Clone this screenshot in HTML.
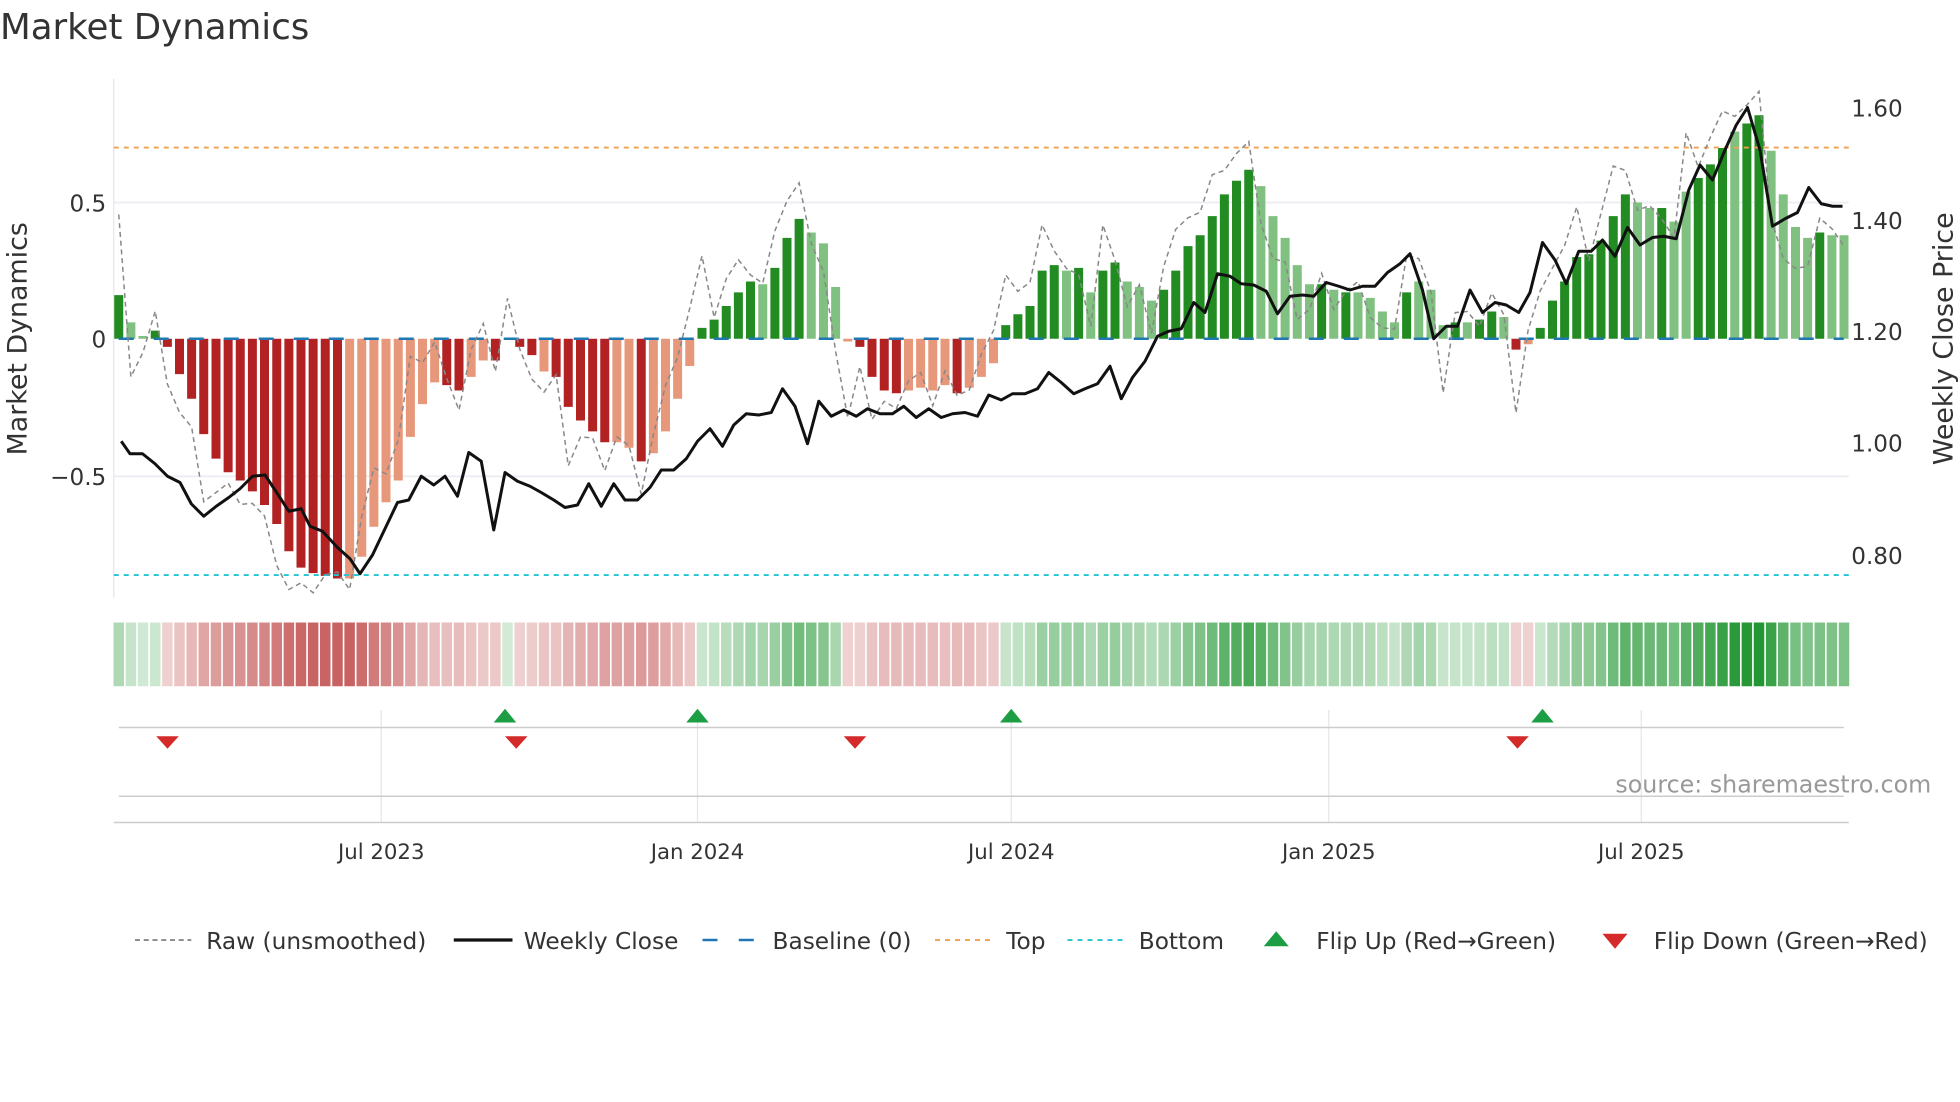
<!DOCTYPE html>
<html><head><meta charset="utf-8"><style>
html,body{margin:0;padding:0;background:#fff;width:1960px;height:1102px;overflow:hidden}
svg{display:block}
text{font-family:"DejaVu Sans","Liberation Sans",sans-serif;fill:#333}
</style></head><body>
<svg id="s" width="1960" height="1102" viewBox="0 0 1568 881.6" xmlns="http://www.w3.org/2000/svg">
<rect width="1568" height="882" fill="#fff"/>
<text x="0" y="31" font-size="28.5">Market Dynamics</text>
<line x1="91" y1="162" x2="1479" y2="162" stroke="#eceef4" stroke-width="1.5"/>
<line x1="91" y1="381" x2="1479" y2="381" stroke="#eceef4" stroke-width="1.5"/>
<line x1="91" y1="63" x2="91" y2="478" stroke="#e6e6e6" stroke-width="1"/>
<g id="bars"></g>
<line x1="91" y1="118" x2="1479" y2="118" stroke="#f0a050" stroke-width="1.5" stroke-dasharray="4,4"/>
<line x1="91" y1="460" x2="1479" y2="460" stroke="#22c4d4" stroke-width="1.5" stroke-dasharray="4,4"/>
<line x1="95" y1="271" x2="1475" y2="271" stroke="#1f77b4" stroke-width="2" stroke-dasharray="12,16"/>
<polyline id="raw" fill="none" stroke="#888" stroke-width="1.2" stroke-dasharray="4,3"/>
<polyline id="close" fill="none" stroke="#111" stroke-width="2.4" stroke-linejoin="round" points="97,353 104,363 114,363 124,371 134,381 144,386 153,403 163,413 173,405 183,398 192,391 202,381 212,380 222,395 231,409 241,407 248,421 258,425 270,438 280,447 288,459 298,444 308,423 318,402 327,400 337,381 347,388 356,381 366,397 375,362 385,369 395,424 404,378 414,385 424,389 433,394 443,400 452,406 462,404 471,387 481,405 491,387 500,400 510,400 520,390 529,376 539,376 549,367 558,353 568,343 578,357 587,340 597,331 607,332 617,330 626,311 636,325 646,355 655,321 665,333 675,328 685,333 694,327 704,331 714,331 723,325 733,334 743,327 753,334 762,331 772,330 782,333 791,316 801,320 810,315 820,315 830,311 839,298 849,306 859,315 868,311 878,307 888,293 897,319 906,302 916,289 926,269 935,265 945,263 955,242 964,250 974,219 984,221 993,227 1003,228 1013,233 1022,251 1032,237 1042,236 1051,237 1061,226 1071,229 1080,232 1090,229 1100,229 1110,218 1120,211 1128,203 1138,232 1147,271 1157,261 1166,261 1176,232 1186,250 1196,242 1205,244 1215,250 1224,234 1234,194 1244,208 1253,227 1263,201 1273,201 1282,192 1292,205 1302,182 1312,196 1322,190 1331,189 1341,191 1351,152 1360,132 1370,144 1380,120 1389,100 1398,86 1408,120 1418,181 1428,175 1438,170 1447,150 1457,163 1466,165 1474,165"/>
<g font-size="18.5">
<text x="85" y="169" text-anchor="end">0.5</text>
<text x="85" y="278" text-anchor="end">0</text>
<text x="85" y="388" text-anchor="end">−0.5</text>
<text x="1481" y="93">1.60</text>
<text x="1481" y="183">1.40</text>
<text x="1481" y="272">1.20</text>
<text x="1481" y="361">1.00</text>
<text x="1481" y="451">0.80</text>
</g>
<text transform="translate(21,271) rotate(-90)" text-anchor="middle" font-size="21.5">Market Dynamics</text>
<text transform="translate(1562,271) rotate(-90)" text-anchor="middle" font-size="21.5">Weekly Close Price</text>
<g id="heat"></g>
<g stroke="#e6e6e6" stroke-width="1">
<line x1="305" y1="568" x2="305" y2="658"/><line x1="558" y1="568" x2="558" y2="658"/><line x1="809" y1="568" x2="809" y2="658"/><line x1="1063" y1="568" x2="1063" y2="658"/><line x1="1313" y1="568" x2="1313" y2="658"/>
</g>
<line x1="95" y1="582" x2="1475" y2="582" stroke="#ccc" stroke-width="1.2"/>
<line x1="95" y1="637" x2="1475" y2="637" stroke="#ccc" stroke-width="1.2"/>
<line x1="91" y1="658" x2="1479" y2="658" stroke="#ccc" stroke-width="1.2"/>
<g fill="#1e9e44">
<polygon points="395,578 413,578 404,567"/><polygon points="549,578 567,578 558,567"/><polygon points="800,578 818,578 809,567"/><polygon points="1225,578 1243,578 1234,567"/>
</g>
<g fill="#d42a2a">
<polygon points="125,589 143,589 134,599"/><polygon points="404,589 422,589 413,599"/><polygon points="675,589 693,589 684,599"/><polygon points="1205,589 1223,589 1214,599"/>
</g>
<g font-size="17" text-anchor="middle">
<text x="305" y="687">Jul 2023</text><text x="558" y="687">Jan 2024</text><text x="809" y="687">Jul 2024</text><text x="1063" y="687">Jan 2025</text><text x="1313" y="687">Jul 2025</text>
</g>
<text x="1545" y="634" text-anchor="end" font-size="19" style="fill:#999">source: sharemaestro.com</text>
<g font-size="18.6">
<line x1="108" y1="752" x2="153" y2="752" stroke="#888" stroke-width="1.5" stroke-dasharray="4,3"/>
<text x="165" y="759">Raw (unsmoothed)</text>
<line x1="363" y1="752" x2="410" y2="752" stroke="#111" stroke-width="2.6"/>
<text x="419" y="759">Weekly Close</text>
<line x1="562" y1="752" x2="608" y2="752" stroke="#1f77b4" stroke-width="2" stroke-dasharray="12,17"/>
<text x="618" y="759">Baseline (0)</text>
<line x1="748" y1="752" x2="794" y2="752" stroke="#f0a050" stroke-width="1.5" stroke-dasharray="4,4"/>
<text x="805" y="759">Top</text>
<line x1="854" y1="752" x2="900" y2="752" stroke="#22c4d4" stroke-width="1.5" stroke-dasharray="4,4"/>
<text x="911" y="759">Bottom</text>
<polygon points="1011,757 1031,757 1021,745" fill="#1e9e44"/>
<text x="1053" y="759">Flip Up (Red→Green)</text>
<polygon points="1282,747 1302,747 1292,759" fill="#d42a2a"/>
<text x="1323" y="759">Flip Down (Green→Red)</text>
</g>
</svg>
<script>
var d="16D 06L 01L 03D -03R -13R -22R -35R -44R -49R -52R -56R -61R -68R -78R -84R -86R -87R -88R -88S -80S -69S -60S -52S -36S -24S -16S -17R -19R -14S -08S -08R 00L -03R -06R -12S -14R -25R -30R -34R -38R -38S -40S -45R -42S -34S -22S -10S 04D 07D 12D 17D 21D 20L 26D 37D 44D 39L 35L 19L -01S -03R -14R -19R -20R -19S -18S -19S -17S -20R -18S -14S -09S 05D 09D 12D 25D 27D 25L 26D 17L 25D 28D 21L 19L 14L 18D 25D 34D 38D 45D 53D 58D 62D 56L 45L 37L 27L 20L 20D 18L 17D 17L 15L 10L 06L 17D 21L 18L 05L 06D 06L 07D 10D 08L -04R -02S 04D 14D 21D 30D 31D 36D 45D 53D 50L 48L 48D 43L 54L 59D 64D 70D 76L 79D 82D 69L 53L 41L 37L 39D 38L 38L".split(" ");
var col={D:"#228b22",L:"#80c080",R:"#b22222",S:"#e8987a"};
var b="",h="",raw=[],prev=0;
for(var i=0;i<d.length;i++){
 var t=d[i].slice(-1),v=parseInt(d[i].slice(0,-1),10)/100;
 var x=95+9.72*i, y0=271, y1=271-v*218;
 if(v!==0) b+='<rect x="'+(x-3.6).toFixed(1)+'" y="'+Math.min(y0,y1).toFixed(1)+'" width="7.2" height="'+Math.abs(y1-y0).toFixed(1)+'" fill="'+col[t]+'"/>';
 var a=Math.min(1,0.2+Math.abs(v)*1.0);
 var c=(v>=0)?"rgba(34,150,50,"+a.toFixed(2)+")":"rgba(180,40,40,"+(0.2+Math.abs(v)*0.6).toFixed(2)+")";
 h+='<rect x="'+(x-4.2).toFixed(1)+'" y="498" width="8.4" height="51" fill="'+c+'"/>';
 var r=v+(v-prev)*1.6+(i%3==0?0.04:(i%3==1?-0.04:0.02));
 raw.push(x.toFixed(1)+","+(271-r*218).toFixed(1));prev=v;
}
document.getElementById("bars").innerHTML=b;
document.getElementById("heat").innerHTML=h;
document.getElementById("raw").setAttribute("points",raw.join(" "));
</script>
</body></html>
